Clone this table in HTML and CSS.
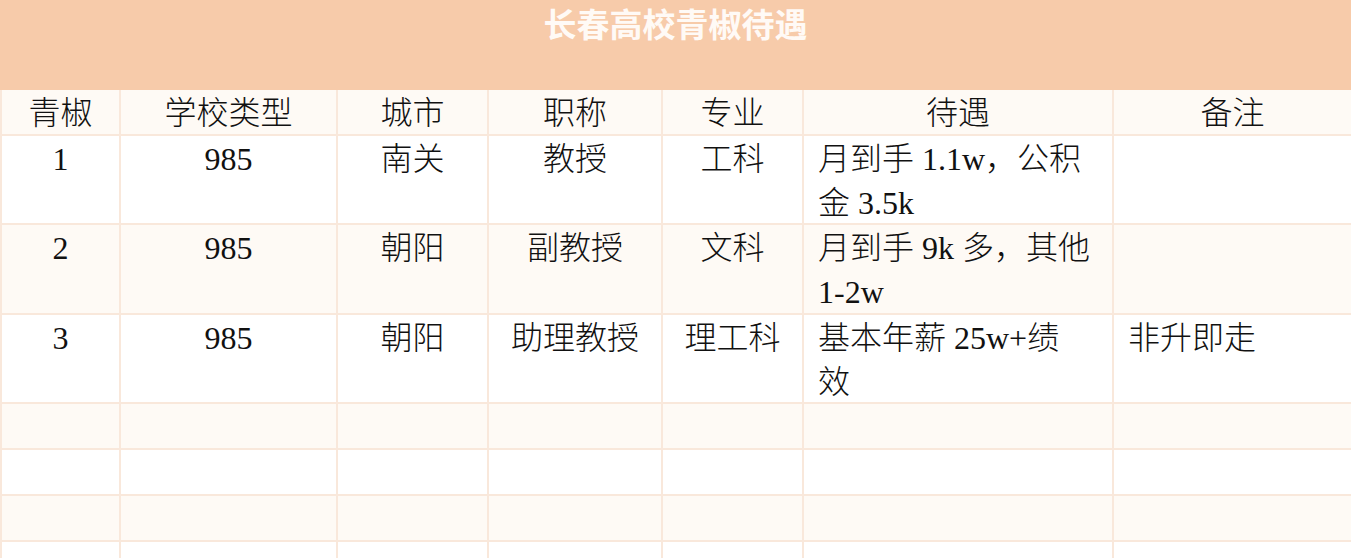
FILE: index.html
```html
<!DOCTYPE html>
<html lang="zh">
<head>
<meta charset="utf-8">
<title>长春高校青椒待遇</title>
<link rel="stylesheet" href="styles.css">
</head>
<body>
<div class="sheet">
  <div class="title-bar"><h1 class="title">长春高校青椒待遇</h1></div>
  <div class="table">
    <div class="row head cream">
      <div class="cell">青椒</div>
      <div class="cell">学校类型</div>
      <div class="cell">城市</div>
      <div class="cell">职称</div>
      <div class="cell">专业</div>
      <div class="cell">待遇</div>
      <div class="cell">备注</div>
    </div>
    <div class="row data r1">
      <div class="cell">1</div>
      <div class="cell">985</div>
      <div class="cell">南关</div>
      <div class="cell">教授</div>
      <div class="cell">工科</div>
      <div class="cell left">月到手 1.1w，公积<br>金 3.5k</div>
      <div class="cell left"></div>
    </div>
    <div class="row data r2 cream">
      <div class="cell">2</div>
      <div class="cell">985</div>
      <div class="cell">朝阳</div>
      <div class="cell">副教授</div>
      <div class="cell">文科</div>
      <div class="cell left">月到手 9k 多，其他<br>1-2w</div>
      <div class="cell left"></div>
    </div>
    <div class="row data r3">
      <div class="cell">3</div>
      <div class="cell">985</div>
      <div class="cell">朝阳</div>
      <div class="cell">助理教授</div>
      <div class="cell">理工科</div>
      <div class="cell left">基本年薪 25w+绩<br>效</div>
      <div class="cell left">非升即走</div>
    </div>
    <div class="row empty cream">
      <div class="cell"></div><div class="cell"></div><div class="cell"></div><div class="cell"></div><div class="cell"></div><div class="cell"></div><div class="cell"></div>
    </div>
    <div class="row empty">
      <div class="cell"></div><div class="cell"></div><div class="cell"></div><div class="cell"></div><div class="cell"></div><div class="cell"></div><div class="cell"></div>
    </div>
    <div class="row empty cream">
      <div class="cell"></div><div class="cell"></div><div class="cell"></div><div class="cell"></div><div class="cell"></div><div class="cell"></div><div class="cell"></div>
    </div>
    <div class="row empty">
      <div class="cell"></div><div class="cell"></div><div class="cell"></div><div class="cell"></div><div class="cell"></div><div class="cell"></div><div class="cell"></div>
    </div>
  </div>
</div>
</body>
</html>
```
FILE: styles.css
```css
* { box-sizing: border-box; }
html, body {
  margin: 0;
  padding: 0;
  background: #ffffff;
}
.sheet {
  width: 1351px;
  height: 558px;
  overflow: hidden;
}
.title-bar {
  height: 90px;
  background: #f7cbaa;
}
.title {
  margin: 0;
  text-align: center;
  font-family: "Noto Sans CJK SC", sans-serif;
  font-weight: 700;
  font-size: 33px;
  line-height: 46px;
  color: #fffaf6;
}
.table {
  font-family: "Liberation Serif", "Noto Sans CJK SC", serif;
  font-size: 32px;
  font-weight: 300;
  color: #111111;
}
.row {
  display: grid;
  grid-template-columns: 119px 217px 151px 174px 141px 310px 239px;
  border-bottom: 2px solid #f9e8db;
  background: #ffffff;
}
.row.cream { background: #fefaf5; }
.row.head { height: 46px; }
.row.r1 { height: 89px; }
.row.r2 { height: 90px; }
.row.r3 { height: 89px; }
.row.empty { height: 46px; }
.cell {
  border-left: 2px solid #f9e8db;
  text-align: center;
  line-height: 44px;
  padding-top: 1px;
  white-space: nowrap;
}
.cell.left {
  text-align: left;
  padding-left: 14px;
}
```
